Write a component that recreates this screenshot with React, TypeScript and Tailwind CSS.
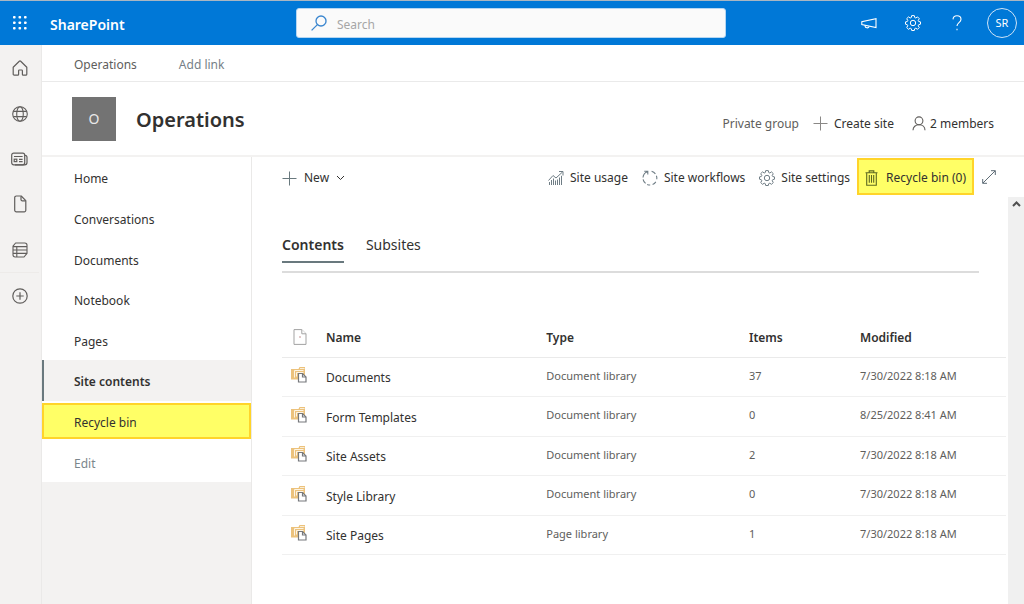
import React from "react";

type IconProps = { className?: string };

const sideLinks = ["Home", "Conversations", "Documents", "Notebook", "Pages", "Site contents", "Recycle bin", "Edit"];

const libraries = [
  { name: "Documents", type: "Document library", items: 37, modified: "7/30/2022 8:18 AM" },
  { name: "Form Templates", type: "Document library", items: 0, modified: "8/25/2022 8:41 AM" },
  { name: "Site Assets", type: "Document library", items: 2, modified: "7/30/2022 8:18 AM" },
  { name: "Style Library", type: "Document library", items: 0, modified: "7/30/2022 8:18 AM" },
  { name: "Site Pages", type: "Page library", items: 1, modified: "7/30/2022 8:18 AM" },
];

function WaffleIcon() {
  return (
    <svg width="16" height="16" viewBox="0 0 16 16" fill="#fff">
      {[1, 6.5, 12].map((y) =>
        [1, 6.5, 12].map((x) => <rect key={`${x}-${y}`} x={x} y={y} width="2.6" height="2.6" rx="0.8" />)
      )}
    </svg>
  );
}

function SearchIcon() {
  return (
    <svg width="16" height="16" viewBox="0 0 16 16" fill="none" stroke="#3a86cf" strokeWidth="1.3">
      <circle cx="10" cy="6" r="5" />
      <path d="M6.4 9.6 0.6 15.4" />
    </svg>
  );
}

function MegaphoneIcon() {
  return (
    <svg width="16" height="16" viewBox="0 0 16 16" fill="none" stroke="currentColor" strokeWidth="1.1">
      <path d="M15 3.6v9L0.8 9.6V6.8z" />
      <path d="M4 10.3v.6a2.2 2.2 0 0 0 4.2.6" />
    </svg>
  );
}

function GearIcon({ className }: IconProps) {
  return (
    <svg className={className} width="16" height="16" viewBox="0 0 16 16" fill="none" stroke="currentColor" strokeWidth="1">
      <path strokeLinejoin="round" d="M6.7.6h2.6l.4 1.9 1.1.5 1.7-1.1 1.8 1.8-1.1 1.7.5 1.1 1.8.4v2.3l-1.8.5-.5 1.1 1.1 1.7-1.8 1.8-1.7-1.1-1.1.5-.4 1.8H6.700l-.4-1.8-1.1-.5-1.7 1.1-1.8-1.8 1.1-1.7-.5-1.1-1.8-.5V6.900l1.800-.4.5-1.100L1.700 3.700l1.800-1.800 1.700 1.100 1.100-.5z" />
      <circle cx="8" cy="8" r="2.7" />
    </svg>
  );
}

function HelpIcon() {
  return (
    <svg width="16" height="16" viewBox="0 0 16 16" fill="none" stroke="currentColor" strokeWidth="1.1">
      <path d="M4 4.4C4.2 2 5.8.7 8 .7s4 1.4 4 3.6c0 3.2-4 3.6-4 6.7" />
      <path d="M8 13.8v1.4" />
    </svg>
  );
}

function HomeIcon() {
  return (
    <svg width="16" height="16" viewBox="0 0 16 16" fill="none" stroke="currentColor" strokeWidth="1.2" strokeLinejoin="round">
      <path d="M1.2 7.2 7.3 1.2a1 1 0 0 1 1.4 0l6.1 6v7a1 1 0 0 1-1 1h-2.6a.8.8 0 0 1-.8-.8v-3.6a.8.8 0 0 0-.8-.8H7.4a.8.8 0 0 0-.8.8v3.6a.8.8 0 0 1-.8.8H2.2a1 1 0 0 1-1-1z" />
    </svg>
  );
}

function GlobeIcon() {
  return (
    <svg width="16" height="16" viewBox="0 0 16 16" fill="none" stroke="currentColor" strokeWidth="1.1">
      <circle cx="8" cy="8" r="7.3" />
      <ellipse cx="8" cy="8" rx="3.3" ry="7.3" />
      <path d="M1.3 5.4h13.4M1.3 10.6h13.4" />
    </svg>
  );
}

function NewsIcon() {
  return (
    <svg width="17" height="16" viewBox="0 0 17 16" fill="none" stroke="currentColor" strokeWidth="1.2">
      <rect x="0.7" y="2.2" width="13" height="11.6" rx="2" />
      <path d="M13.7 4.3a2 2 0 0 1 2.3 2v5.2a2.3 2.3 0 0 1-2.3 2.3H4" />
      <path d="M3 5.5h8.6M8 8.3h3.6M8 10.7h3.6" />
      <rect x="3.2" y="8.2" width="2.6" height="2.4" />
    </svg>
  );
}

function PageIcon() {
  return (
    <svg width="16" height="18" viewBox="0 0 16 18" fill="none" stroke="currentColor" strokeWidth="1.2" strokeLinejoin="round">
      <path d="M4.3 1h4.9l4.6 4.6v9.6a1.6 1.6 0 0 1-1.6 1.6H4.3a1.6 1.6 0 0 1-1.6-1.6V2.6A1.6 1.6 0 0 1 4.3 1z" />
      <path d="M9 1.2v3.4a1.2 1.2 0 0 0 1.2 1.2h3.4" />
    </svg>
  );
}

function ListIcon() {
  return (
    <svg width="16" height="16" viewBox="0 0 16 16" fill="none" stroke="currentColor" strokeWidth="1.1" strokeLinejoin="round">
      <path d="M3.6 1h9.2a2.2 2.2 0 0 1 2.2 2.2v8.2L12 15H3.2A2.2 2.2 0 0 1 1 12.8V4.2z" />
      <path d="M1 4.6h14M1 8h14M1 11.4h14M4.8 4.6V15" />
    </svg>
  );
}

function AddCircleIcon() {
  return (
    <svg width="16" height="16" viewBox="0 0 16 16" fill="none" stroke="currentColor" strokeWidth="1.2">
      <circle cx="8" cy="8" r="7.2" />
      <path d="M8 4.3v7.4M4.3 8h7.4" />
    </svg>
  );
}

function PlusIcon({ className }: IconProps) {
  return (
    <svg className={className} width="15" height="15" viewBox="0 0 15 15" fill="none" stroke="currentColor">
      <path d="M7.5.5v14M.5 7.5h14" />
    </svg>
  );
}

function PersonIcon() {
  return (
    <svg width="14" height="15" viewBox="0 0 14 15" fill="none" stroke="#605e5c" strokeWidth="1.1">
      <circle cx="7" cy="4.8" r="3.9" />
      <path d="M1 14.3c0-3.4 2.6-5.6 6-5.6s6 2.2 6 5.6" />
    </svg>
  );
}

function UsageIcon() {
  return (
    <svg width="16" height="16" viewBox="0 0 16 16" fill="none" stroke="#6f7d85" strokeWidth="1">
      <path d="M.5 10.500 5 5.500l3 2.500 6.500-6M11 1.500h4v4" />
      <path d="M1.500 12V15M3.500 10v5M5.500 8.500V15M7.500 10.500V15M9.500 9.500V15M11.500 7.500V15M13.500 5.800V15" />
    </svg>
  );
}

function WorkflowIcon() {
  return (
    <svg width="16" height="16" viewBox="0 0 16 16" fill="none" stroke="#6f7d85" strokeWidth="1.1">
      <path d="M2.2 1.2h3.600v3.400M5.800 1.400A7 7 0 0 0 1 7.500M1.100 9.300A7 7 0 0 0 3.600 13.400M5.200 14.400a7 7 0 0 0 3 .6M10.600 14.500a7 7 0 0 0 3.200-2.600M14.800 9.200a7 7 0 0 0-.4-3.400M13.400 3.800A7 7 0 0 0 9.600 1.200" />
    </svg>
  );
}

function TrashIcon() {
  return (
    <svg width="13" height="16" viewBox="0 0 13 16" fill="none" stroke="#5d6a22" strokeWidth="1.1">
      <path d="M.5 2.7h12M4.2 2.5V.9h4.6v1.6M1.7 2.7v12.5h9.6V2.7" />
      <path d="M4.3 5v7.8M6.5 5v7.8M8.7 5v7.8" />
    </svg>
  );
}

function ExpandIcon() {
  return (
    <svg width="14" height="14" viewBox="0 0 14 14" fill="none" stroke="#5d6b75" strokeWidth="1">
      <path d="M.8 13.2 13.2.8M9 .7h4.3V5M.7 9v4.3H5" />
    </svg>
  );
}

function ChevronIcon({ className }: IconProps) {
  return (
    <svg className={className} width="9" height="6" viewBox="0 0 9 6" fill="none" stroke="currentColor">
      <path d="M1 1l3.5 3.5L8 1" />
    </svg>
  );
}

function FileIcon() {
  return (
    <svg width="14" height="16" viewBox="0 0 14 16" fill="#fff" stroke="#a3a3a3" strokeWidth="1">
      <path d="M1 .6h7.8L13 4.8v10.6H1z" />
      <path d="M8.8.6v4.2H13" />
      <rect x="6.5" y="7.5" width="1" height="1" fill="#8b2f2f" stroke="none" />
    </svg>
  );
}

function LibraryIcon() {
  return (
    <svg width="16" height="17" viewBox="0 0 16 17" fill="none">
      <path d="M0 3h7.5l1-2H14v12.500H0z" fill="#ecc27c" />
      <path d="M9 2.500h4.500" stroke="#fbeed6" />
      <path d="M3.500 11.500v-7h9" stroke="#fdf4e3" />
      <path d="M5.500 10.500v-4h7" stroke="#fdf4e3" />
      <path d="M7.500 7.500h4l3.500 3.500v5H7.500z" fill="#fff" stroke="#76787c" strokeWidth="1.2" />
      <path d="M11.500 7.500V11H15" stroke="#76787c" strokeWidth="1.2" />
    </svg>
  );
}

function TopBar() {
  return (
    <header className="flex h-[45px] items-center justify-between border-t border-[#a9b6c2] bg-[#0078d7] text-white">
      <div className="flex flex-1 items-center">
        <button aria-label="App launcher" className="flex w-10 justify-center">
          <WaffleIcon />
        </button>
        <a href="#" className="ml-[10px] pt-[3px] text-[14px] font-semibold leading-5">SharePoint</a>
      </div>
      <label className="ml-[5px] flex h-[30px] w-[42%] items-center gap-[10px] rounded-[3px] border border-[#b5d6f2] bg-[#fafafa] px-[14px]">
        <SearchIcon />
        <input type="search" aria-label="Search" placeholder="Search" className="min-w-0 flex-1 bg-transparent pt-[3px] text-[12px] text-[#323130] outline-none placeholder:text-[#a6a6a6]" />
      </label>
      <div className="flex flex-1 items-center justify-end gap-7 pr-[7px]">
        <button aria-label="What's new"><MegaphoneIcon /></button>
        <button aria-label="Settings"><GearIcon /></button>
        <button aria-label="Help"><HelpIcon /></button>
        <button className="-ml-[6px] flex size-[30px] items-center justify-center rounded-full border border-[#cfe4f7] text-[11px]">SR</button>
      </div>
    </header>
  );
}

function AppRail() {
  return (
    <nav aria-label="Apps" className="flex w-[42px] shrink-0 flex-col border-r border-[#eae9e8] bg-[#f3f2f1] pr-[2px] text-[#605e5c]">
      <a href="#" aria-label="Home" className="flex h-[46px] items-center justify-center"><HomeIcon /></a>
      <a href="#" aria-label="My sites" className="flex h-[45px] items-center justify-center"><GlobeIcon /></a>
      <a href="#" aria-label="News" className="flex h-[45px] items-center justify-center"><NewsIcon /></a>
      <a href="#" aria-label="Files" className="flex h-[46px] items-center justify-center"><PageIcon /></a>
      <a href="#" aria-label="Lists" className="flex h-[45px] items-center justify-center"><ListIcon /></a>
      <a href="#" aria-label="Create" className="flex h-[46px] items-center justify-center border-t border-[#edebe9]"><AddCircleIcon /></a>
    </nav>
  );
}

function SiteHeader() {
  return (
    <div className="bg-white">
      <div className="flex h-[37px] items-center gap-[42px] border-b border-[#eaeaea] pl-8 pt-[3px] text-[12px] text-[#605e5c]">
        <a href="#">Operations</a>
        <a href="#" className="text-[#767f87]">Add link</a>
      </div>
      <div className="flex h-[75px] items-center border-b-2 border-[#f3f2f1] px-[30px]">
        <div className="flex size-11 items-center justify-center bg-[#737373] text-[14px] text-[#e8e8e8]">O</div>
        <h1 className="ml-5 flex-1 pt-[3px] text-[20px] font-semibold text-[#323130]">Operations</h1>
        <div className="flex items-center gap-[14px] pt-[10px] text-[12px] text-[#323130]">
          <span className="text-[#605e5c]">Private group</span>
          <button className="flex items-center gap-[6px]">
            <PlusIcon className="text-[#8a8886]" />
            Create site
          </button>
          <a href="#" className="ml-1 flex items-center gap-1">
            <PersonIcon />
            2 members
          </a>
        </div>
      </div>
    </div>
  );
}

function SideNav() {
  return (
    <nav aria-label="Site" className="w-[210px] shrink-0 border-r border-[#eae9e8] bg-[#f3f2f1]">
      <ul className="grid h-[325px] grid-rows-8 bg-white text-[12px] text-[#323130]">
        {sideLinks.map((link) => {
          if (link === "Site contents") {
            return (
              <li key={link} className="flex">
                <a href="#" aria-current="page" className="flex flex-1 items-center border-l-2 border-[#69797e] bg-[#f3f2f1] pl-[30px] pt-1 font-semibold">{link}</a>
              </li>
            );
          }
          if (link === "Recycle bin") {
            return (
              <li key={link} className="flex py-[2px]">
                <a href="#" className="flex flex-1 items-center border-2 border-[#ffd42a] bg-[#ffff66] pl-[30px] pt-1">{link}</a>
              </li>
            );
          }
          return (
            <li key={link} className="flex">
              <a href="#" className={link === "Edit" ? "flex flex-1 items-center pl-8 pt-1 text-[#7b868c]" : "flex flex-1 items-center pl-8 pt-1"}>{link}</a>
            </li>
          );
        })}
      </ul>
    </nav>
  );
}

function CommandBar() {
  return (
    <div className="flex h-[39px] items-center justify-between pl-[30px] pr-7 text-[12px] text-[#323130]">
      <button className="flex items-center gap-[7px] pt-[3px]">
        <PlusIcon className="text-[#69797e]" />
        New
        <ChevronIcon />
      </button>
      <div className="flex items-center">
        <button className="mr-[14px] flex items-center gap-[6px] pt-[3px]"><UsageIcon />Site usage</button>
        <button className="mr-[14px] flex items-center gap-[6px] pt-[3px]"><WorkflowIcon />Site workflows</button>
        <button className="mr-[7px] flex items-center gap-[6px] pt-[3px]"><GearIcon className="text-[#6f7d85]" />Site settings</button>
        <button className="mr-2 flex h-[37px] items-center gap-2 border-2 border-[#ffd42a] bg-[#ffff66] px-[6px] pt-[3px]"><TrashIcon />Recycle bin (0)</button>
        <button aria-label="Expand content"><ExpandIcon /></button>
      </div>
    </div>
  );
}

function LibraryTable() {
  return (
    <table className="h-[238px] w-full table-fixed border-collapse text-left text-[#323130]">
      <thead>
        <tr className="h-10 border-b border-[#eaeaea] text-[12px]">
          <th className="w-11 pl-[11px]"><FileIcon /></th>
          <th className="pt-[3px] font-semibold">Name</th>
          <th className="w-[28%] pt-[3px] font-semibold">Type</th>
          <th className="w-[111px] pt-[3px] font-semibold">Items</th>
          <th className="w-[146px] pt-[3px] font-semibold">Modified</th>
        </tr>
      </thead>
      <tbody>
        {libraries.map((lib) => (
          <tr key={lib.name} className="h-[39px] border-b border-[#f0f0f0] text-[11px] text-[#605e5c]">
            <td className="pb-1 pl-[9px]"><LibraryIcon /></td>
            <td className="pt-[3px] text-[12px] text-[#323130]"><a href="#">{lib.name}</a></td>
            <td className="pb-[2px]">{lib.type}</td>
            <td className="pb-[2px]">{lib.items}</td>
            <td className="pb-[2px]">{lib.modified}</td>
          </tr>
        ))}
      </tbody>
    </table>
  );
}

function Contents() {
  return (
    <main className="flex min-w-0 flex-1 flex-col bg-white">
      <CommandBar />
      <div className="mt-px flex flex-1">
        <div className="min-w-0 flex-1 pl-[30px] pr-[2px]">
          <div role="tablist" className="mr-[27px] mt-9 flex gap-[22px] border-b-2 border-[#dcdcdc] pb-2 text-[14px] text-[#323130]">
            <button role="tab" aria-selected="true" className="h-[30px] border-b-2 border-[#69797e] pb-1 font-semibold leading-5">Contents</button>
            <button role="tab" aria-selected="false" className="h-[30px] border-b-2 border-transparent pb-1 leading-5">Subsites</button>
          </div>
          <div className="mt-11">
            <LibraryTable />
          </div>
        </div>
        <div className="flex w-4 shrink-0 justify-center bg-[#f0f0f0] pt-1">
          <ChevronIcon className="rotate-180 stroke-2 text-[#505050]" />
        </div>
      </div>
    </main>
  );
}

export default function App() {
  return (
    <div className="flex min-h-screen flex-col bg-white font-['Noto_Sans','Open_Sans',sans-serif]">
      <TopBar />
      <div className="flex flex-1">
        <AppRail />
        <div className="flex min-w-0 flex-1 flex-col">
          <SiteHeader />
          <div className="flex flex-1">
            <SideNav />
            <Contents />
          </div>
        </div>
      </div>
    </div>
  );
}
